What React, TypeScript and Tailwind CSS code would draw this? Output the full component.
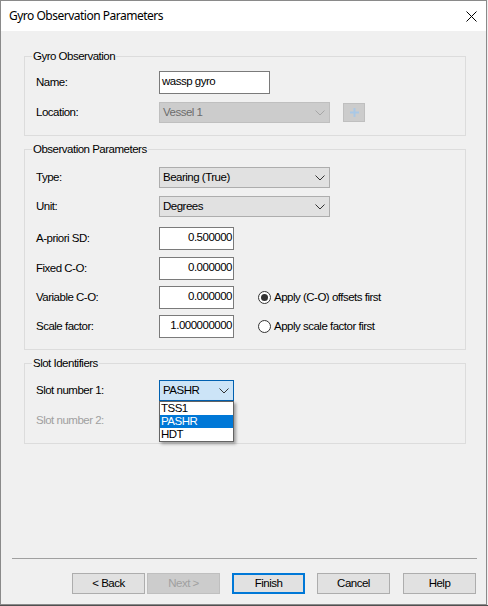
import React from "react";

const ui = "font-['Liberation_Sans',Arial,sans-serif] text-[11.5px] tracking-[-0.5px]";

function Chevron({ color = "#333" }: { color?: string }) {
  return (
    <svg width="10" height="6" viewBox="0 0 10 6" className="shrink-0">
      <path d="M0.5 0.5 L5 5 L9.5 0.5" fill="none" stroke={color} strokeWidth="1" />
    </svg>
  );
}

function GroupBox({ title, children, className = "" }: { title: string; children: React.ReactNode; className?: string }) {
  return (
    <fieldset className={`w-[442px] border border-[#dcdcdc] ${className}`}>
      <legend className="ml-[7px] px-[1px] leading-[13px] text-black">{title}</legend>
      {children}
    </fieldset>
  );
}

function Label({ children, disabled }: { children: React.ReactNode; disabled?: boolean }) {
  return <div className={`w-[123px] shrink-0 ${disabled ? "text-[#a0a0a0]" : "text-black"}`}>{children}</div>;
}

function TextBox({ value, w, right }: { value: string; w: string; right?: boolean }) {
  return (
    <div
      className={`${w} h-[23px] bg-white border border-[#7a7a7a] flex items-center pb-[2px] ${
        right ? "justify-end pr-[1px]" : "pl-[2px]"
      } text-black`}
    >
      {value}
    </div>
  );
}

function ComboBox({ value, w, disabled }: { value: string; w: string; disabled?: boolean }) {
  return (
    <div
      className={`${w} h-[21px] flex items-center justify-between pl-[3px] pr-[4px] border ${
        disabled ? "bg-[#cccccc] border-[#bfbfbf] text-[#6d6d6d]" : "bg-[#e1e1e1] border-[#adadad] text-black"
      }`}
    >
      <span>{value}</span>
      <Chevron color={disabled ? "#a6a6a6" : "#333"} />
    </div>
  );
}

function Radio({ checked, label }: { checked?: boolean; label: string }) {
  return (
    <div className="flex items-center ml-[24px]">
      <div className="w-[13px] h-[13px] rounded-full border border-[#333] bg-white flex items-center justify-center">
        {checked && <div className="w-[7px] h-[7px] rounded-full bg-[#333]" />}
      </div>
      <span className="ml-[3px] text-black">{label}</span>
    </div>
  );
}

function Button({ label, disabled, primary, className = "" }: { label: string; disabled?: boolean; primary?: boolean; className?: string }) {
  return (
    <div
      className={`w-[73px] h-[21px] flex items-center justify-center ${className} ${
        disabled
          ? "bg-[#cccccc] border border-[#bfbfbf] text-[#a0a0a0]"
          : primary
          ? "bg-[#e1e1e1] border-2 border-[#0078d7] text-black"
          : "bg-[#e1e1e1] border border-[#adadad] text-black"
      }`}
    >
      {label}
    </div>
  );
}

export default function App() {
  return (
    <div className={`w-[488px] h-[606px] bg-[#f0f0f0] ${ui}`}>
      <div className="w-[487px] h-[605px] border border-[#8a8a8a] bg-[#f0f0f0] flex flex-col">
        <div className="h-[30px] bg-white flex items-center justify-between pl-[8px] pr-[9px] shrink-0">
          <span className="font-['Noto_Sans',sans-serif] text-[12px] tracking-[-0.5px] text-black">Gyro Observation Parameters</span>
          <svg width="11" height="11" viewBox="0 0 11 11">
            <path d="M0.5 0.5 L10.5 10.5 M10.5 0.5 L0.5 10.5" stroke="#000" strokeWidth="1" />
          </svg>
        </div>

        <div className="pl-[23px] flex flex-col">
          <GroupBox title="Gyro Observation" className="mt-[19px]">
            <div className="pl-[11px] pt-[8px] pb-[12px] flex flex-col">
              <div className="flex items-center h-[23px]">
                <Label>Name:</Label>
                <TextBox value="wassp gyro" w="w-[111px]" />
              </div>
              <div className="flex items-center h-[21px] mt-[8px]">
                <Label>Location:</Label>
                <ComboBox value="Vessel 1" w="w-[171px]" disabled />
                <div className="ml-[13px] w-[22px] h-[19px] bg-[#cccccc] border border-[#bfbfbf] flex items-center justify-center">
                  <svg width="9" height="9" viewBox="0 0 9 9">
                    <path d="M3.5 0 H5.5 V3.5 H9 V5.5 H5.5 V9 H3.5 V5.5 H0 V3.5 H3.5 Z" fill="#a9c8e6" />
                  </svg>
                </div>
              </div>
            </div>
          </GroupBox>

          <GroupBox title="Observation Parameters" className="mt-[7px]">
            <div className="pl-[11px] pt-[11px] pb-[11px] flex flex-col">
              <div className="flex items-center h-[21px]">
                <Label>Type:</Label>
                <ComboBox value="Bearing (True)" w="w-[171px]" />
              </div>
              <div className="flex items-center h-[21px] mt-[8px]">
                <Label>Unit:</Label>
                <ComboBox value="Degrees" w="w-[171px]" />
              </div>
              <div className="flex items-center h-[23px] mt-[10px]">
                <Label>A-priori SD:</Label>
                <TextBox value="0.500000" w="w-[75px]" right />
              </div>
              <div className="flex items-center h-[23px] mt-[7px]">
                <Label>Fixed C-O:</Label>
                <TextBox value="0.000000" w="w-[75px]" right />
              </div>
              <div className="flex items-center h-[23px] mt-[6px]">
                <Label>Variable C-O:</Label>
                <TextBox value="0.000000" w="w-[75px]" right />
                <Radio checked label="Apply (C-O) offsets first" />
              </div>
              <div className="flex items-center h-[23px] mt-[6px]">
                <Label>Scale factor:</Label>
                <TextBox value="1.000000000" w="w-[75px]" right />
                <Radio label="Apply scale factor first" />
              </div>
            </div>
          </GroupBox>

          <GroupBox title="Slot Identifiers" className="mt-[7px]">
            <div className="pl-[11px] pt-[10px] pb-[12px] flex flex-col">
              <div className="flex items-center h-[21px]">
                <Label>Slot number 1:</Label>
                <div className="relative">
                  <div className="w-[75px] h-[21px] flex items-center justify-between pl-[3px] pr-[4px] border border-[#0060b0] bg-[#cce4f7] text-black">
                    <span>PASHR</span>
                    <Chevron />
                  </div>
                  <div className="absolute left-0 top-[21px] w-[75px] border border-[#646464] bg-white shadow-[2px_2px_3px_rgba(0,0,0,0.35)] z-10">
                    <div className="h-[13px] leading-[13px] pl-[1px] text-black">TSS1</div>
                    <div className="h-[13px] leading-[13px] pl-[1px] bg-[#0078d7] text-white">PASHR</div>
                    <div className="h-[13px] leading-[13px] pl-[1px] text-black">HDT</div>
                  </div>
                </div>
              </div>
              <div className="flex items-center h-[21px] mt-[9px]">
                <Label disabled>Slot number 2:</Label>
              </div>
            </div>
          </GroupBox>
        </div>

        <div className="flex-1" />
        <div className="ml-[11px] w-[465px] h-px bg-[#a0a0a0]" />
        <div className="flex mt-[14px] mb-[10px] ml-[71px]">
          <Button label="< Back" />
          <Button label="Next >" disabled className="ml-[2px]" />
          <Button label="Finish" primary className="ml-[12px]" />
          <Button label="Cancel" className="ml-[12px]" />
          <Button label="Help" className="ml-[13px]" />
        </div>
      </div>
      <div className="w-[488px] h-px bg-[#505050]" />
    </div>
  );
}
